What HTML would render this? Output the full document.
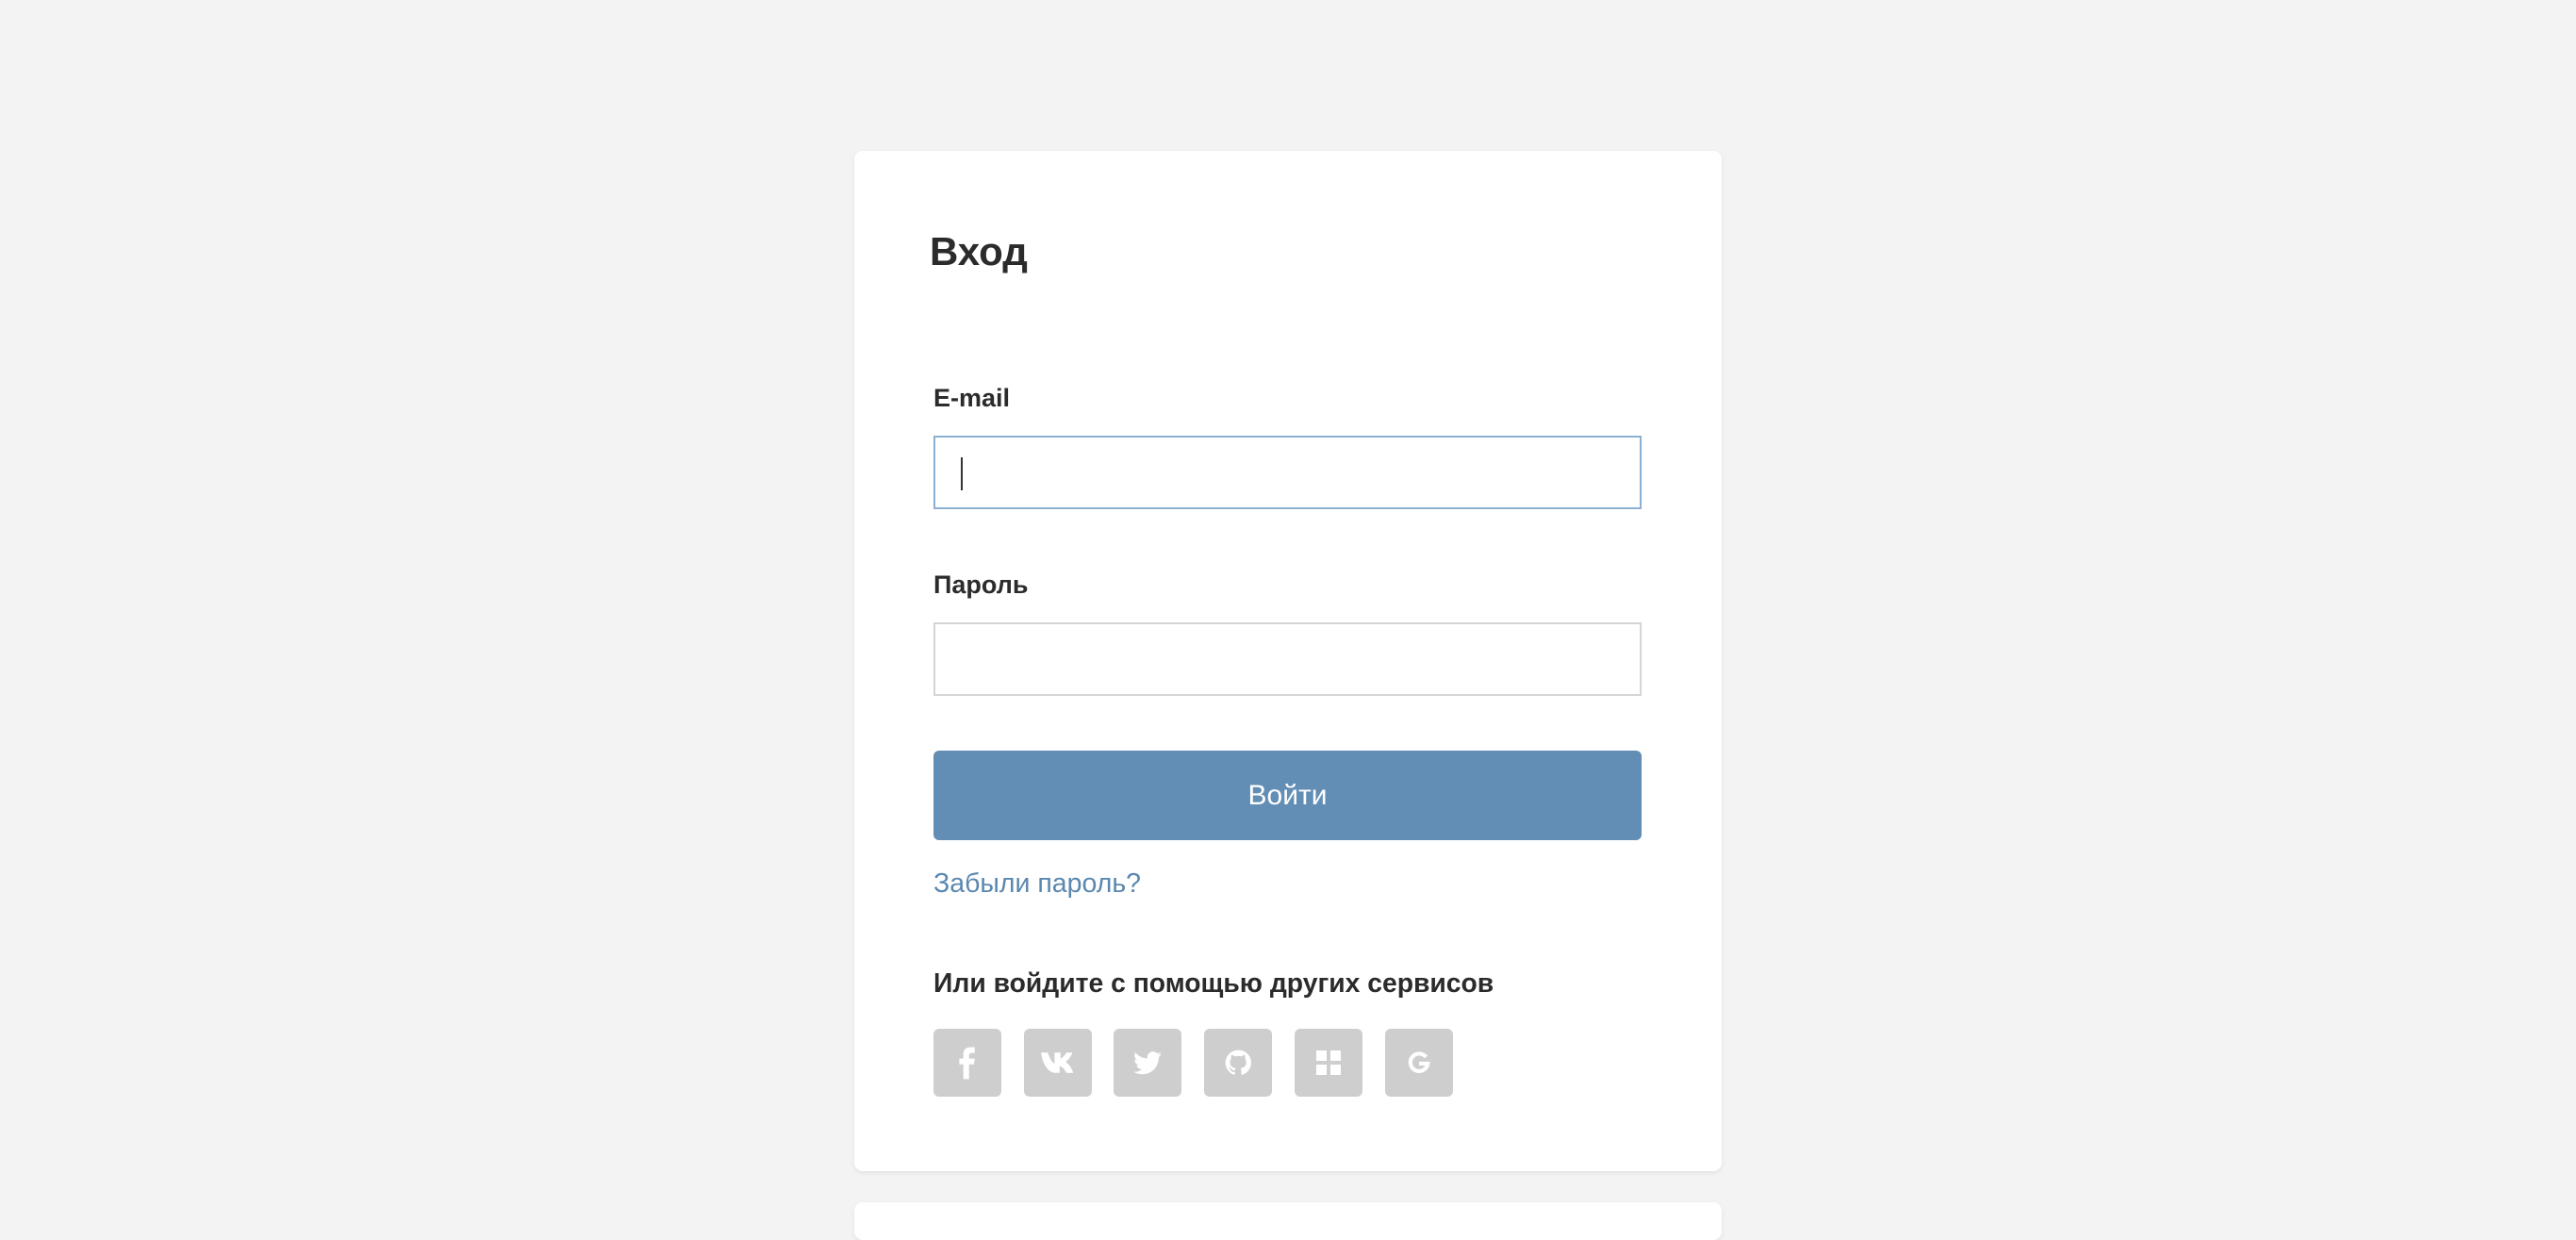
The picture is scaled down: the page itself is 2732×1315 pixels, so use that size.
<!DOCTYPE html>
<html><head><meta charset="utf-8"><style>
html,body{margin:0;padding:0}
body{width:2732px;height:1290px;background:#f3f3f3;position:relative;overflow:hidden;font-family:"Liberation Sans","Noto Sans CJK SC",sans-serif;color:#2b2b2b}
.card{position:absolute;left:906px;width:920px;background:#fff;border-radius:9px;box-shadow:0 2px 5px rgba(0,0,0,0.08)}
.t{position:absolute;line-height:1;white-space:nowrap}
.inp{position:absolute;left:990px;width:751px;height:78px;box-sizing:border-box;background:#fff}
.ic{position:absolute;top:1091px;width:72px;height:72px;background:#cecece;border-radius:6px;display:flex;align-items:center;justify-content:center}
</style></head><body>
<div class="card" style="top:160px;height:1082px"></div>
<div class="card" style="top:1275px;height:40px"></div>

<div class="t" style="left:986px;top:246px;font-size:42px;font-weight:bold">Вход</div>
<div class="t" style="left:990px;top:409px;font-size:27px;font-weight:bold">E-mail</div>
<div class="inp" style="top:462px;border:2px solid #8cb0d2"></div>
<div style="position:absolute;left:1019px;top:485px;width:2px;height:35px;background:#333"></div>
<div class="t" style="left:990px;top:607px;font-size:27px;font-weight:bold">Пароль</div>
<div class="inp" style="top:660px;border:2px solid #d5d5d5"></div>
<div style="position:absolute;left:990px;top:796px;width:751px;height:95px;background:#628eb5;border-radius:6px;color:#fff;font-size:30px;display:flex;align-items:center;justify-content:center">Войти</div>
<div class="t" style="left:990px;top:923px;font-size:28.5px;color:#5b88b0">Забыли пароль?</div>
<div class="t" style="left:990px;top:1028px;font-size:28.3px;font-weight:bold">Или войдите с помощью других сервисов</div>

<div class="ic" style="left:990px"><svg width="26" height="36" viewBox="0 0 30 40"><path d="M10 40V22H5v-7h5v-5c0-6 3-9 9-9h5v7h-3c-3 0-4 1-4 3v4h7l-1 7h-6v18z" fill="#fff"/></svg></div>
<div class="ic" style="left:1086px"><svg width="36" height="24" viewBox="0 0 40 26"><path d="M0 1h8c2 6 5 12 8 13V1h7v7c3-1 6-5 7-7h7c-1 4-5 9-8 11 3 2 7 6 9 13h-8c-2-4-4-7-8-8v8h-4C8 25 2 14 0 1z" fill="#fff"/></svg></div>
<div class="ic" style="left:1181px"><svg width="30" height="25" viewBox="0 0 24 20"><path d="M24 2.4c-.9.4-1.8.7-2.8.8 1-.6 1.8-1.6 2.2-2.7-1 .6-2 1-3.1 1.2A4.9 4.9 0 0 0 11.9 6 14 14 0 0 1 1.7.9a4.9 4.9 0 0 0 1.5 6.6c-.8 0-1.6-.2-2.2-.6 0 2.4 1.700 4.4 3.9 4.8-.7.2-1.5.2-2.2.1.6 2 2.4 3.4 4.6 3.4A9.900 9.900 0 0 1 0 17.200 14 14 0 0 0 7.5 19.4c9.1 0 14-7.5 14-14v-.6c1-.7 1.8-1.6 2.5-2.4z" fill="#fff"/></svg></div>
<div class="ic" style="left:1277px"><svg width="28" height="28" viewBox="0 0 24 24"><path d="M12 .5a11.5 11.5 0 0 0-3.6 22.4c.6.1.8-.2.8-.6v-2c-3.2.7-3.9-1.5-3.9-1.5-.5-1.3-1.3-1.7-1.3-1.7-1-.7.1-.7.1-.7 1.2.1 1.8 1.2 1.8 1.2 1 1.8 2.7 1.3 3.4 1 .1-.8.4-1.3.7-1.6-2.6-.3-5.3-1.3-5.3-5.7 0-1.3.5-2.3 1.2-3.1-.1-.3-.5-1.5.1-3.1 0 0 1-.3 3.2 1.2a11 11 0 0 1 5.8 0c2.2-1.5 3.2-1.2 3.2-1.2.6 1.6.2 2.8.1 3.1.7.8 1.2 1.8 1.2 3.1 0 4.4-2.7 5.4-5.3 5.7.4.4.8 1.1.8 2.2v3.2c0 .4.2.7.8.6A11.5 11.5 0 0 0 12 .5z" fill="#fff"/></svg></div>
<div class="ic" style="left:1373px"><svg width="26" height="26" viewBox="0 0 26 26"><rect x="0" y="0" width="11" height="11" fill="#fff"/><rect x="15" y="0" width="11" height="11" fill="#fff"/><rect x="0" y="15" width="11" height="11" fill="#fff"/><rect x="15" y="15" width="11" height="11" fill="#fff"/></svg></div>
<div class="ic" style="left:1469px"><svg width="24" height="24" viewBox="0 0 26 26"><path d="M21 6.5A10 10 0 1 0 23 14H13" fill="none" stroke="#fff" stroke-width="4.5"/></svg></div>
</body></html>
